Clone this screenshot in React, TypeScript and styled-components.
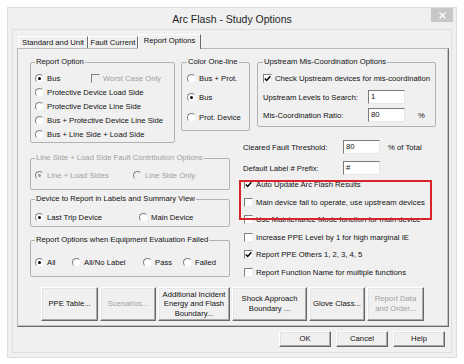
import React from 'react';
import styled, { createGlobalStyle } from 'styled-components';

const GlobalStyle = createGlobalStyle`
  html, body {
    margin: 0;
    padding: 0;
    background: #ffffff;
  }
  body {
    font-family: "Liberation Sans", Arial, sans-serif;
    font-size: 7.7px;
    color: #111111;
  }
`;

const Window = styled.div`
  box-sizing: border-box;
  margin: 7px 0 0 7px;
  width: 450px;
  border: 1px solid #dddddd;
  background: #f0f0f0;
`;

const TitleBar = styled.div`
  height: 21px;
  display: grid;
  grid-template-columns: 1fr auto 1fr;
  align-items: center;
`;

const Title = styled.div`
  grid-column: 2;
  font-size: 10.5px;
  color: #1e1e1e;
  white-space: nowrap;
`;

const CloseButton = styled.div`
  justify-self: end;
  align-self: start;
  width: 22px;
  height: 14px;
  margin-right: 3px;
  background: #c7c7c7;
  display: flex;
  align-items: center;
  justify-content: center;
`;

const ClientArea = styled.div`
  margin: 0 4px 4px;
  border: 1px solid #e0e0e0;
  padding: 0 2px 5px 4px;
`;

const TabStrip = styled.div`
  position: relative;
  z-index: 1;
  display: flex;
  align-items: flex-end;
  height: 18px;
  padding-left: 1px;
`;

const Tab = styled.div<{ $w: number; $active?: boolean }>`
  box-sizing: border-box;
  width: ${(p) => p.$w}px;
  height: ${(p) => (p.$active ? 15 : 12)}px;
  margin-bottom: ${(p) => (p.$active ? -1 : 0)}px;
  border-top: 1px solid #ffffff;
  border-left: 1px solid #ffffff;
  border-right: 1px solid #6b6b6b;
  background: #f0f0f0;
  text-align: center;
  line-height: ${(p) => (p.$active ? 12 : 11)}px;
  white-space: nowrap;
`;

const Panel = styled.div`
  position: relative;
  border-top: 1px solid #b8b8b8;
  border-left: 1px solid #b8b8b8;
  border-right: 1px solid #696969;
  border-bottom: 1px solid #696969;
  box-shadow: inset -1px -1px 0 #c0c0c0;
  padding: 8px 0 5px 0;
`;

const PanelGrid = styled.div`
  display: grid;
  grid-template-columns: 213px 1fr;
  padding-left: 12px;
`;

const Column = styled.div`
  position: relative;
  display: flex;
  flex-direction: column;
  align-items: flex-start;
`;

const GroupRow = styled.div`
  display: flex;
  gap: 6px;
  align-items: flex-start;
`;

const Group = styled.fieldset<{ $w: number; $pt: number; $pb: number; $pl?: number; $mt?: number; $ml?: number }>`
  box-sizing: border-box;
  flex-shrink: 0;
  width: ${(p) => p.$w}px;
  min-width: 0;
  margin: ${(p) => p.$mt ?? 0}px 0 0 ${(p) => p.$ml ?? 0}px;
  padding: ${(p) => `${p.$pt}px 3px ${p.$pb}px ${p.$pl ?? 4}px`};
  border: 1px solid #b2b2b2;
  border-radius: 2px;
`;

const Legend = styled.legend<{ $disabled?: boolean }>`
  padding: 0 1px;
  margin: 0;
  line-height: 10px;
  white-space: nowrap;
  color: ${(p) => (p.$disabled ? '#a0a0a0' : '#111111')};
`;

const OptionRow = styled.div<{ $mt?: number }>`
  display: flex;
  align-items: center;
  height: 14px;
  margin-top: ${(p) => p.$mt ?? 0}px;
`;

const Option = styled.div<{ $w?: number; $disabled?: boolean }>`
  display: flex;
  align-items: center;
  gap: 3px;
  flex-shrink: 0;
  width: ${(p) => (p.$w ? `${p.$w}px` : 'auto')};
  white-space: nowrap;
  color: ${(p) => (p.$disabled ? '#a0a0a0' : '#111111')};
`;

const RadioMark = styled.span<{ $checked?: boolean; $disabled?: boolean }>`
  box-sizing: border-box;
  flex-shrink: 0;
  width: 9px;
  height: 9px;
  border-radius: 50%;
  border: 1px solid;
  border-color: #808080 #f4f4f4 #f4f4f4 #808080;
  background: ${(p) => (p.$disabled ? '#f0f0f0' : '#ffffff')};
  display: flex;
  align-items: center;
  justify-content: center;

  &::after {
    content: '';
    width: 3px;
    height: 3px;
    border-radius: 50%;
    background: ${(p) => (p.$checked ? (p.$disabled ? '#9a9a9a' : '#000000') : 'transparent')};
  }
`;

const CheckMark = styled.span<{ $disabled?: boolean }>`
  box-sizing: border-box;
  flex-shrink: 0;
  width: 9px;
  height: 9px;
  border: 1px solid;
  border-color: #808080 #ececec #ececec #808080;
  background: ${(p) => (p.$disabled ? '#f0f0f0' : '#ffffff')};
  display: flex;
  align-items: center;
  justify-content: center;
`;

const FieldRow = styled.div<{ $mt?: number }>`
  display: flex;
  align-items: center;
  height: 14px;
  margin-top: ${(p) => p.$mt ?? 0}px;
  white-space: nowrap;
`;

const FieldLabel = styled.span<{ $w: number }>`
  width: ${(p) => p.$w}px;
  flex-shrink: 0;
`;

const TextBox = styled.div`
  box-sizing: border-box;
  width: 37px;
  height: 14px;
  padding-left: 2px;
  line-height: 12px;
  background: #ffffff;
  border: 1px solid;
  border-color: #7a7a7a #e6e6e6 #e6e6e6 #7a7a7a;
`;

const Unit = styled.span<{ $ml: number }>`
  margin-left: ${(p) => p.$ml}px;
`;

const CheckList = styled.div`
  position: relative;
  margin-top: 1px;
  padding-left: 1px;
`;

const CheckRow = styled.div`
  display: flex;
  align-items: center;
  height: 17.5px;
`;

const Highlight = styled.div`
  position: absolute;
  left: -4px;
  top: 4px;
  width: 193px;
  height: 40px;
  box-sizing: border-box;
  border: 2px solid #d9232b;
  pointer-events: none;
`;

const ButtonRow = styled.div`
  display: flex;
  gap: 2px;
  margin: 6px 0 0 23px;
`;

const PushButton = styled.button<{ $w: number; $h: number; $disabled?: boolean }>`
  box-sizing: border-box;
  width: ${(p) => p.$w}px;
  height: ${(p) => p.$h}px;
  padding: 0 2px;
  margin: 0;
  font: inherit;
  line-height: 9.6px;
  text-align: center;
  white-space: pre-line;
  background: #f0f0f0;
  color: ${(p) => (p.$disabled ? '#a0a0a0' : '#111111')};
  border: 1px solid;
  border-color: #ffffff #696969 #696969 #ffffff;
  box-shadow: inset -1px -1px 0 #a8a8a8, inset 1px 1px 0 #e4e4e4;
`;

const Footer = styled.div`
  display: flex;
  justify-content: flex-end;
  gap: 5px;
  margin-top: 4px;
  padding-right: 4px;
`;

type ItemProps = { label: string; checked?: boolean; disabled?: boolean; width?: number };

const RadioItem = ({ label, checked, disabled, width }: ItemProps) => (
  <Option $w={width} $disabled={disabled}>
    <RadioMark $checked={checked} $disabled={disabled} />
    <span>{label}</span>
  </Option>
);

const CheckItem = ({ label, checked, disabled, width }: ItemProps) => (
  <Option $w={width} $disabled={disabled}>
    <CheckMark $disabled={disabled}>
      {checked && (
        <svg width="7" height="7" viewBox="0 0 7 7">
          <path d="M0.8 3.4 L2.7 5.4 L6.3 1.2" stroke="#000" strokeWidth="1.5" fill="none" />
        </svg>
      )}
    </CheckMark>
    <span>{label}</span>
  </Option>
);

const reportOptions = [
  'Protective Device Load Side',
  'Protective Device Line Side',
  'Bus + Protective Device Line Side',
  'Bus + Line Side + Load Side',
];

const colorOptions = [
  { label: 'Bus + Prot.', checked: false },
  { label: 'Bus', checked: true },
  { label: 'Prot. Device', checked: false },
];

const rightChecks = [
  { label: 'Auto Update Arc Flash Results', checked: true },
  { label: 'Main device fail to operate, use upstream devices', checked: false },
  { label: 'Use Maintenance Mode function for main device', checked: false },
  { label: 'Increase PPE Level by 1 for high marginal IE', checked: false },
  { label: 'Report PPE Others 1, 2, 3, 4, 5', checked: true },
  { label: 'Report Function Name for multiple functions', checked: false },
];

const panelButtons = [
  { label: 'PPE Table...', w: 57 },
  { label: 'Scenarios...', w: 56, disabled: true },
  { label: 'Additional Incident\nEnergy and Flash\nBoundary...', w: 72 },
  { label: 'Shock Approach\nBoundary ...', w: 75 },
  { label: 'Glove Class...', w: 56 },
  { label: 'Report Data\nand Order...', w: 57, disabled: true },
];

export default function App() {
  return (
    <>
      <GlobalStyle />
      <Window>
        <TitleBar>
          <Title>Arc Flash - Study Options</Title>
          <CloseButton>
            <svg width="7" height="7" viewBox="0 0 7 7">
              <path d="M0.5 0.5 L6.5 6.5 M6.5 0.5 L0.5 6.5" stroke="#ffffff" strokeWidth="1.4" />
            </svg>
          </CloseButton>
        </TitleBar>

        <ClientArea>
          <TabStrip>
            <Tab $w={70}>Standard and Unit</Tab>
            <Tab $w={50}>Fault Current</Tab>
            <Tab $w={63} $active>Report Options</Tab>
          </TabStrip>

          <Panel>
            <PanelGrid>
              <Column>
                <GroupRow>
                  <Group $w={145} $pt={4} $pb={1}>
                    <Legend>Report Option</Legend>
                    <OptionRow>
                      <RadioItem label="Bus" checked width={56} />
                      <CheckItem label="Worst Case Only" disabled />
                    </OptionRow>
                    {reportOptions.map((label) => (
                      <OptionRow key={label}>
                        <RadioItem label={label} />
                      </OptionRow>
                    ))}
                  </Group>

                  <Group $w={69} $pt={4} $pb={6} $pl={5}>
                    <Legend>Color One-line</Legend>
                    {colorOptions.map((o, i) => (
                      <OptionRow key={o.label} $mt={i === 0 ? 0 : 5.5}>
                        <RadioItem label={o.label} checked={o.checked} />
                      </OptionRow>
                    ))}
                  </Group>
                </GroupRow>

                <Group $w={200} $pt={5} $pb={7} $mt={10}>
                  <Legend $disabled>Line Side + Load Side Fault Contribution Options</Legend>
                  <OptionRow>
                    <RadioItem label="Line + Load Sides" checked disabled width={98} />
                    <RadioItem label="Line Side Only" disabled />
                  </OptionRow>
                </Group>

                <Group $w={200} $pt={6} $pb={2} $mt={4}>
                  <Legend>Device to Report in Labels and Summary View</Legend>
                  <OptionRow>
                    <RadioItem label="Last Trip Device" checked width={104} />
                    <RadioItem label="Main Device" />
                  </OptionRow>
                </Group>

                <Group $w={200} $pt={10} $pb={7} $mt={8}>
                  <Legend>Report Options when Equipment Evaluation Failed</Legend>
                  <OptionRow>
                    <RadioItem label="All" checked width={37} />
                    <RadioItem label="All/No Label" width={71} />
                    <RadioItem label="Pass" width={40} />
                    <RadioItem label="Failed" />
                  </OptionRow>
                </Group>
              </Column>

              <Column>
                <Group $w={179} $pt={4} $pb={4} $pl={5} $ml={14}>
                  <Legend>Upstream Mis-Coordination Options</Legend>
                  <OptionRow>
                    <CheckItem label="Check Upstream devices for mis-coordination" checked />
                  </OptionRow>
                  <FieldRow $mt={5}>
                    <FieldLabel $w={105}>Upstream Levels to Search:</FieldLabel>
                    <TextBox>1</TextBox>
                  </FieldRow>
                  <FieldRow $mt={4}>
                    <FieldLabel $w={105}>Mis-Coordination Ratio:</FieldLabel>
                    <TextBox>80</TextBox>
                    <Unit $ml={13}>%</Unit>
                  </FieldRow>
                </Group>

                <FieldRow $mt={13}>
                  <FieldLabel $w={100}>Cleared Fault Threshold:</FieldLabel>
                  <TextBox>80</TextBox>
                  <Unit $ml={8}>% of Total</Unit>
                </FieldRow>
                <FieldRow $mt={7}>
                  <FieldLabel $w={100}>Default Label # Prefix:</FieldLabel>
                  <TextBox>#</TextBox>
                </FieldRow>

                <CheckList>
                  {rightChecks.map((c) => (
                    <CheckRow key={c.label}>
                      <CheckItem label={c.label} checked={c.checked} />
                    </CheckRow>
                  ))}
                  <Highlight />
                </CheckList>
              </Column>
            </PanelGrid>

            <ButtonRow>
              {panelButtons.map((b) => (
                <PushButton key={b.label} $w={b.w} $h={34} $disabled={b.disabled}>
                  {b.label}
                </PushButton>
              ))}
            </ButtonRow>
          </Panel>

          <Footer>
            <PushButton $w={52} $h={16}>OK</PushButton>
            <PushButton $w={52} $h={16}>Cancel</PushButton>
            <PushButton $w={52} $h={16}>Help</PushButton>
          </Footer>
        </ClientArea>
      </Window>
    </>
  );
}
